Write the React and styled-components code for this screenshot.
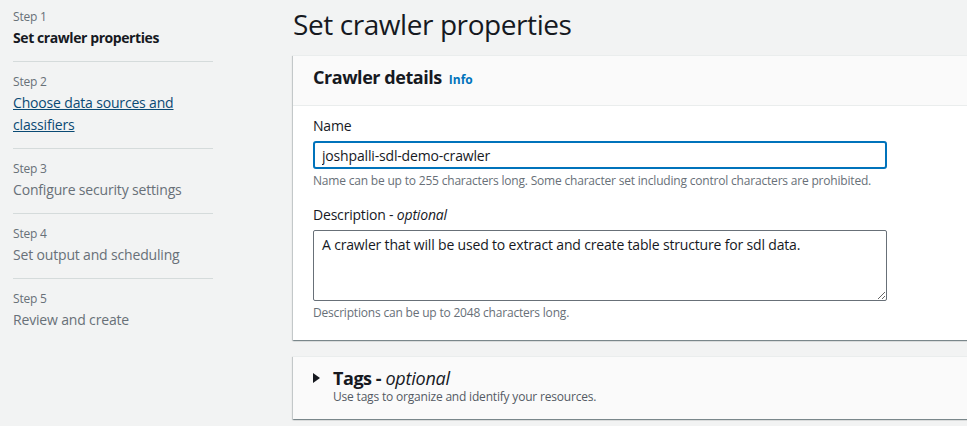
import React from 'react';
import styled, { createGlobalStyle } from 'styled-components';

const GlobalStyle = createGlobalStyle`
    html, body {
        margin: 0;
        padding: 0;
        background: #f2f3f3;
        font-family: "Open Sans", "Noto Sans", Arial, sans-serif;
        letter-spacing: -0.012em;
        color: #16191f;
        overflow: hidden;
    }
`

const Page = styled.div`
    display: flex;
    width: 967px;
    height: 426px;
    overflow: hidden;
`

const Sidebar = styled.nav`
    width: 280px;
    flex-shrink: 0;
    padding-left: 13px;
    box-sizing: border-box;
`

const StepList = styled.ol`
    list-style: none;
    margin: 0;
    padding: 0;
    width: 200px;
`

const StepItem = styled.li`
    padding: ${p => (p.$first ? '9px' : '12px')} 0 12px;
    border-bottom: ${p => (p.$last ? 'none' : '1px solid #d5dbdb')};
`

const StepLabel = styled.div`
    font-size: 12px;
    line-height: 16px;
    color: #687078;
    margin-bottom: 2px;
`

const StepTitle = styled.div`
    font-size: 14px;
    line-height: 22px;
    color: ${p => (p.$state === 'current' ? '#16191f' : p.$state === 'link' ? '#0a4a74' : '#687078')};
    font-weight: ${p => (p.$state === 'current' ? 700 : 400)};
    letter-spacing: ${p => (p.$state === 'current' ? '-0.03em' : '-0.012em')};
    text-decoration: ${p => (p.$state === 'link' ? 'underline' : 'none')};
`

const Main = styled.main`
    flex: 1;
    min-width: 0;
    padding: 6px 0 0 13px;
    overflow: hidden;
`

const Title = styled.h1`
    margin: 0 0 13px;
    font-size: 28px;
    line-height: 36px;
    font-weight: 400;
    letter-spacing: -0.015em;
    color: #16191f;
`

const Container = styled.section`
    width: 720px;
    background: #ffffff;
    border-top: 1px solid #eaeded;
    box-shadow: 0 1px 1px 0 rgba(0, 28, 36, 0.3), 1px 1px 1px 0 rgba(0, 28, 36, 0.15), -1px 1px 1px 0 rgba(0, 28, 36, 0.15);
    margin-bottom: 16px;
`

const Header = styled.div`
    background: #fafafa;
    padding: 10px 20px 14px;
    border-bottom: ${p => (p.$bordered ? '1px solid #eaeded' : 'none')};
    display: flex;
    align-items: flex-start;
    gap: 13px;
`

const HeaderTitle = styled.h2`
    margin: 0;
    font-size: 18px;
    line-height: 22px;
    font-weight: 700;
    letter-spacing: -0.025em;
    color: #16191f;

    em {
        font-weight: 400;
        letter-spacing: -0.012em;
    }
`

const InfoLink = styled.span`
    font-size: 12px;
    font-weight: 700;
    letter-spacing: 0;
    color: #0073bb;
    margin-left: 7px;
`

const Body = styled.div`
    padding: 9px 20px 19px;
`

const Field = styled.div`
    margin-bottom: ${p => p.$gap || '0'};
`

const Label = styled.label`
    display: block;
    font-size: 14px;
    line-height: 22px;
    margin-bottom: 4px;
    color: #16191f;

    em {
        font-style: italic;
    }
`

const TextInput = styled.input`
    display: block;
    width: 574px;
    height: 28px;
    box-sizing: border-box;
    border: 2px solid #0073bb;
    border-radius: 3px;
    padding: 0 7px;
    font-family: inherit;
    font-size: 14px;
    letter-spacing: -0.012em;
    color: #16191f;
    outline: none;
`

const TextArea = styled.textarea`
    display: block;
    width: 574px;
    height: 71px;
    box-sizing: border-box;
    border: 1px solid #687078;
    border-radius: 2px;
    padding: 3px 8px;
    font-family: inherit;
    font-size: 14px;
    line-height: 22px;
    letter-spacing: -0.012em;
    color: #16191f;
    outline: none;
`

const Hint = styled.div`
    font-size: 12px;
    line-height: 16px;
    color: #687078;
    margin-top: 4px;
`

const Caret = styled.span`
    width: 0;
    height: 0;
    margin-top: 6px;
    border-top: 5px solid transparent;
    border-bottom: 5px solid transparent;
    border-left: 7px solid #16191f;
`

const Description = styled.div`
    font-size: 12px;
    line-height: 16px;
    color: #545b64;
`

const steps = [
    { title: 'Set crawler properties', state: 'current' },
    { title: 'Choose data sources and classifiers', state: 'link' },
    { title: 'Configure security settings', state: 'disabled' },
    { title: 'Set output and scheduling', state: 'disabled' },
    { title: 'Review and create', state: 'disabled' },
];

export default function App() {
    return (
        <Page>
            <GlobalStyle />
            <Sidebar>
                <StepList>
                    {steps.map((step, i) => (
                        <StepItem key={step.title} $first={i === 0} $last={i === steps.length - 1}>
                            <StepLabel>{`Step ${i + 1}`}</StepLabel>
                            <StepTitle $state={step.state}>{step.title}</StepTitle>
                        </StepItem>
                    ))}
                </StepList>
            </Sidebar>
            <Main>
                <Title>Set crawler properties</Title>
                <Container>
                    <Header $bordered>
                        <HeaderTitle>
                            Crawler details<InfoLink>Info</InfoLink>
                        </HeaderTitle>
                    </Header>
                    <Body>
                        <Field $gap="15px">
                            <Label>Name</Label>
                            <TextInput readOnly value="joshpalli-sdl-demo-crawler" />
                            <Hint>Name can be up to 255 characters long. Some character set including control characters are prohibited.</Hint>
                        </Field>
                        <Field>
                            <Label>Description - <em>optional</em></Label>
                            <TextArea readOnly value="A crawler that will be used to extract and create table structure for sdl data." />
                            <Hint>Descriptions can be up to 2048 characters long.</Hint>
                        </Field>
                    </Body>
                </Container>
                <Container>
                    <Header>
                        <Caret />
                        <div>
                            <HeaderTitle>Tags - <em>optional</em></HeaderTitle>
                            <Description>Use tags to organize and identify your resources.</Description>
                        </div>
                    </Header>
                </Container>
            </Main>
        </Page>
    )
}
